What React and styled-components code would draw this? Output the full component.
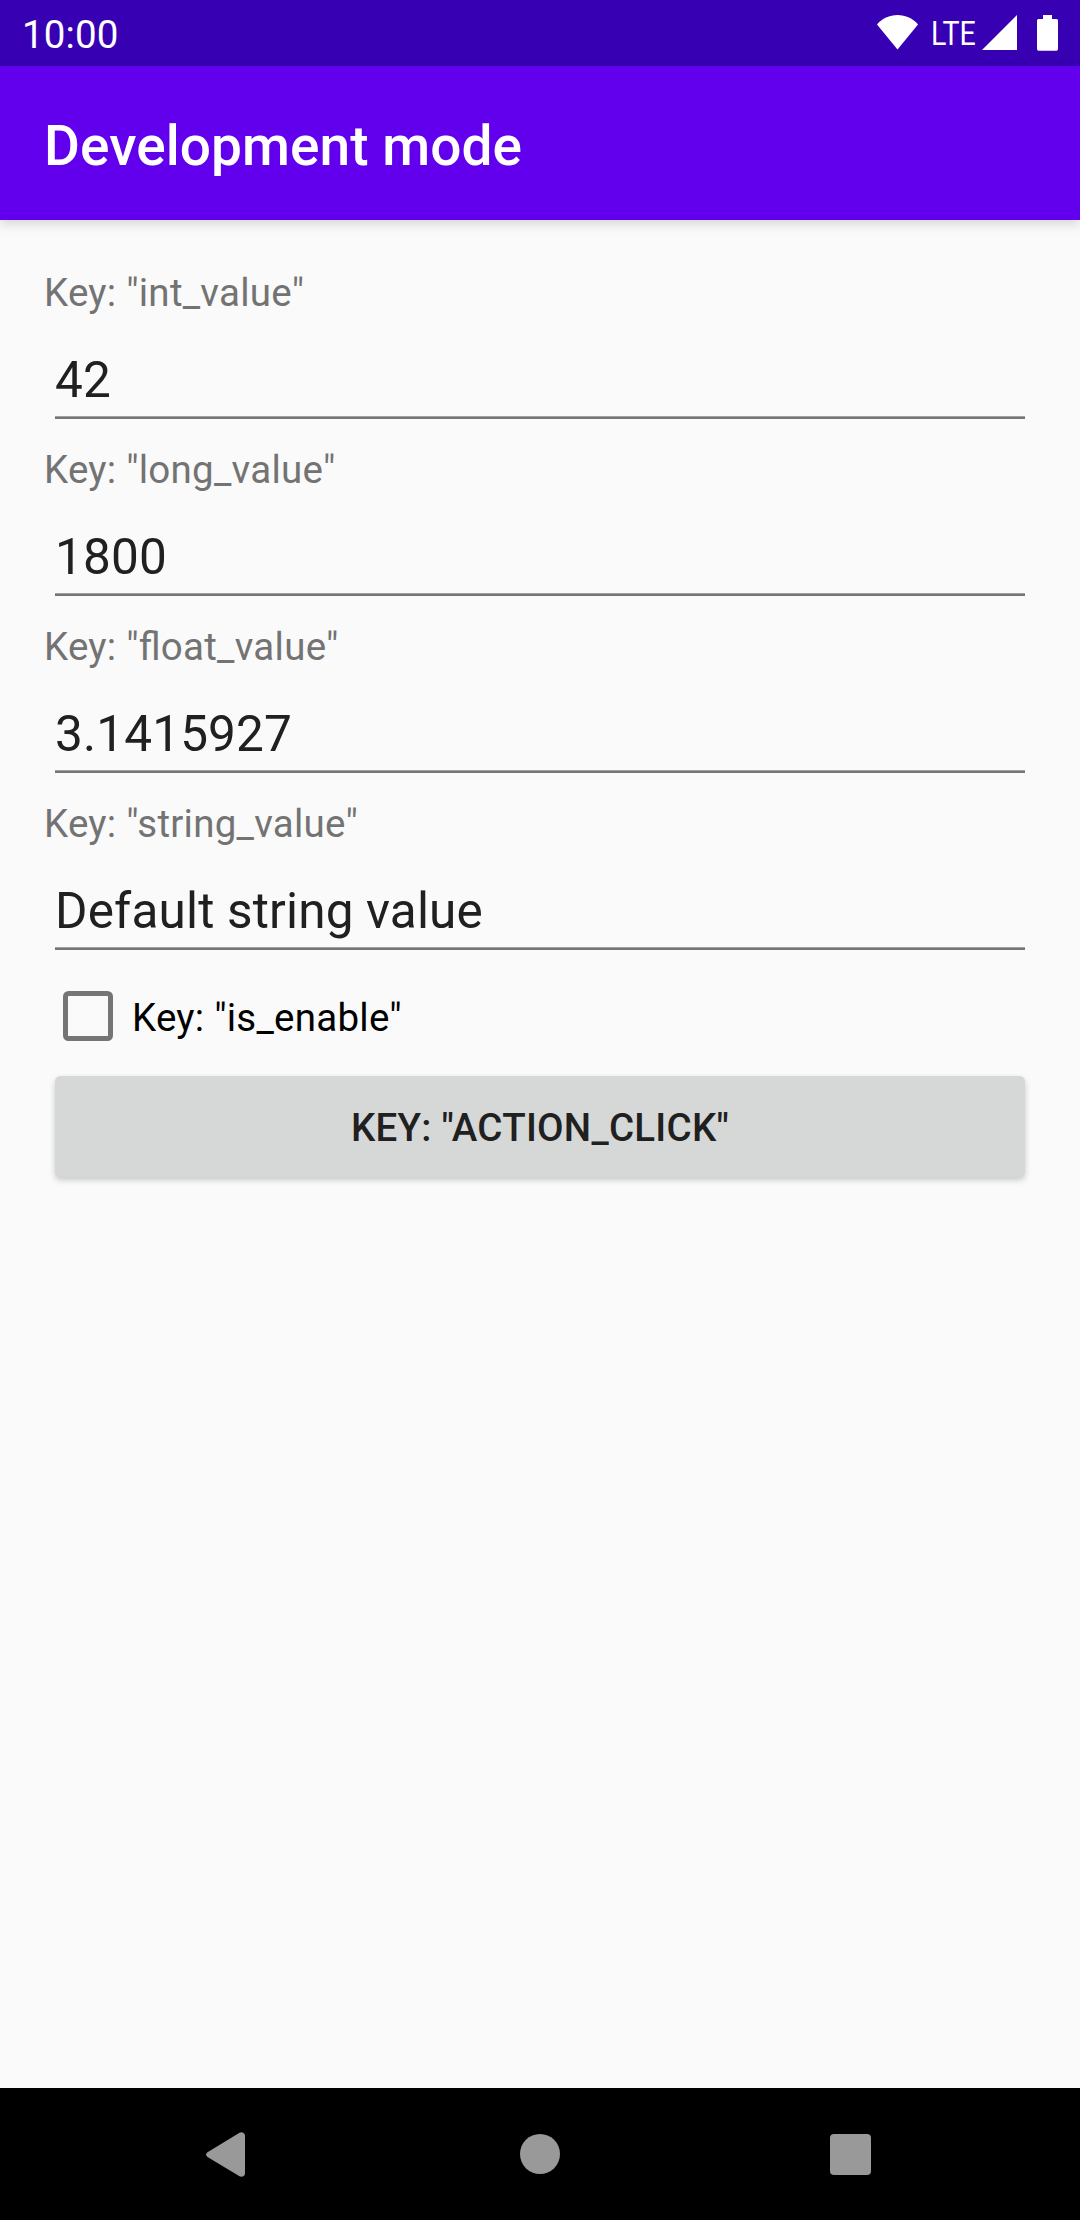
import React from "react";
import styled, { createGlobalStyle } from "styled-components";

const GlobalStyle = createGlobalStyle`
  * { box-sizing: border-box; }
  body { margin: 0; background: #fafafa; font-family: Roboto, "Liberation Sans", sans-serif; }
`;

const Screen = styled.div`
  display: flex;
  flex-direction: column;
  width: 1080px;
  height: 2220px;
  background: #fafafa;
`;

const StatusBar = styled.div`
  display: flex;
  align-items: flex-start;
  justify-content: space-between;
  height: 66px;
  padding: 0 22px;
  background: #3700b3;
  color: #fff;
`;

const Clock = styled.span`
  padding-top: 12px;
  font-size: 38.5px;
  line-height: 45px;
  letter-spacing: 0.1px;
`;

const StatusIcons = styled.div`
  display: flex;
  align-items: flex-start;
  padding-top: 15px;
`;

const Network = styled.span`
  width: 51px;
  margin-left: 13px;
  font-size: 34px;
  line-height: 36px;
  transform: scaleX(0.84);
  transform-origin: left;
`;

const Battery = styled.svg`
  margin-left: 20px;
`;

const AppBar = styled.header`
  display: flex;
  align-items: center;
  height: 154px;
  padding: 6px 44px 0;
  background: #6200ee;
  color: #fff;
  box-shadow: 0 4px 11px rgba(0, 0, 0, 0.15);
`;

const Title = styled.h1`
  margin: 0;
  font-size: 55px;
  font-weight: 500;
  line-height: 64px;
  letter-spacing: 0.06px;
`;

const Content = styled.main`
  display: flex;
  flex: 1;
  flex-direction: column;
  padding: 44px 44px 0;
`;

const Field = styled.div`
  display: flex;
  flex-direction: column;
  height: 177px;
`;

const Label = styled.span`
  color: #737373;
  font-size: 38.5px;
  line-height: 58px;
  letter-spacing: 0.25px;
  font-feature-settings: "liga" 1;
`;

const Value = styled.div`
  margin: 29px 11px 0;
  padding-bottom: 8px;
  border-bottom: 2px solid #757575;
  box-shadow: inset 0 -1px #a0a0a0;
  color: #202020;
  font-size: 49.5px;
  line-height: 58px;
  letter-spacing: 0.16px;
`;

const CheckRow = styled.div`
  display: flex;
  align-items: center;
  gap: 19px;
  height: 88px;
  padding-left: 19px;
  color: #000;
  font-size: 38.5px;
`;

const CheckBox = styled.span`
  width: 50px;
  height: 50px;
  border: 5.5px solid #757575;
  border-radius: 5.5px;
`;

const CheckText = styled.span`
  padding-top: 3px;
  line-height: 45px;
  letter-spacing: 0.25px;
`;

const Button = styled.button`
  height: 100.5px;
  margin: 16px 11px 0;
  padding: 2px 0 0;
  border: 0;
  border-radius: 5.5px;
  background: #d6d7d7;
  color: #202020;
  box-shadow: 0 3px 6px rgba(0, 0, 0, 0.2);
  font: 500 38.5px/45px Roboto, "Liberation Sans", sans-serif;
  letter-spacing: 0.26px;
`;

const NavBar = styled.nav`
  display: flex;
  align-items: flex-start;
  height: 132px;
  padding: 44px 0 0 206px;
  background: #000;
`;

const Back = styled.svg`
  margin-right: 275px;
`;

const Home = styled.span`
  width: 40px;
  height: 40px;
  margin: 2px 270px 0 0;
  border-radius: 50%;
  background: #999;
`;

const Recents = styled.span`
  width: 41px;
  height: 41px;
  margin-top: 2px;
  border-radius: 4px;
  background: #999;
`;

const fields = [
  ["int_value", "42"],
  ["long_value", "1800"],
  ["float_value", "3.1415927"],
  ["string_value", "Default string value"],
];

export default function App() {
  return (
    <Screen>
      <GlobalStyle />
      <StatusBar>
        <Clock>10:00</Clock>
        <StatusIcons>
          <svg width="41" height="36" viewBox="0 0 41 36" fill="#fff">
            <path d="M0 9.5C5 3.500 12.500 0 20.500 0S36 3.500 41 9.500L20.500 34.500Z" />
          </svg>
          <Network>LTE</Network>
          <svg width="35" height="36" viewBox="0 0 35 36" fill="#fff">
            <path d="M35 0V35H0Z" />
          </svg>
          <Battery width="21" height="36" viewBox="0 0 21 36" fill="#fff">
            <path d="M6 0H15V4H19.500Q21 4 21 5.500V34Q21 35.700 19.500 35.700H1.500Q0 35.700 0 34V5.500Q0 4 1.500 4H6Z" />
          </Battery>
        </StatusIcons>
      </StatusBar>
      <AppBar>
        <Title>Development mode</Title>
      </AppBar>
      <Content>
        {fields.map(([name, value]) => (
          <Field key={name}>
            <Label>{`Key: "${name}"`}</Label>
            <Value>{value}</Value>
          </Field>
        ))}
        <CheckRow>
          <CheckBox role="checkbox" aria-checked="false" />
          <CheckText>Key: "is_enable"</CheckText>
        </CheckRow>
        <Button>KEY: "ACTION_CLICK"</Button>
      </Content>
      <NavBar>
        <Back width="39" height="46" viewBox="0 0 39 46" fill="#999">
          <path d="M1.500 20.300L33.500 0.800Q36 -0.500 38 1.500Q39 2.400 39 4V41.200Q39 42.800 38 43.700Q36 45.500 33.500 44.300L1.500 24.900Q-1.500 22.600 1.500 20.300Z" />
        </Back>
        <Home />
        <Recents />
      </NavBar>
    </Screen>
  );
}
